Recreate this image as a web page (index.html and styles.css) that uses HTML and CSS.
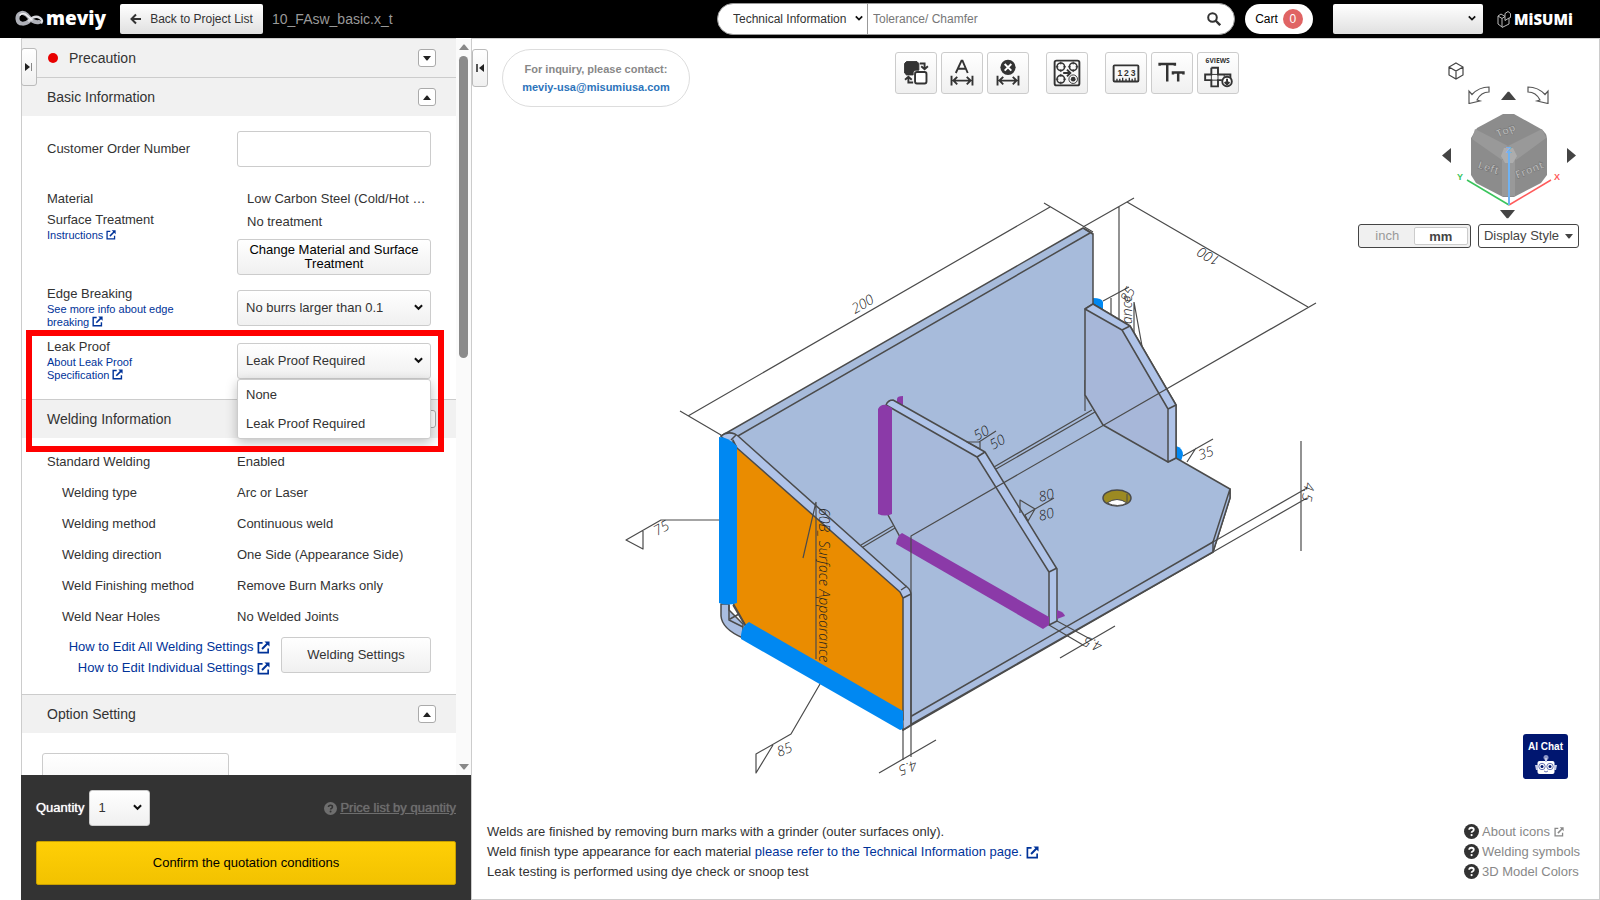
FILE: index.html
```html
<!DOCTYPE html>
<html lang="en">
<head>
<meta charset="utf-8">
<title>meviy - 10_FAsw_basic.x_t</title>
<link rel="stylesheet" href="styles.css">
</head>
<body>
<svg class="defs" aria-hidden="true">
  <symbol id="ext" viewBox="0 0 14 14"><path d="M6 2H1.500V12.500H12V8" fill="none" stroke="currentColor" stroke-width="1.800"/><path d="M8 .5h5.500V6l-2-2-5.300 5.300-1.500-1.500L10 2.500z" fill="currentColor"/></symbol>
  <symbol id="chev" viewBox="0 0 10 8"><path d="M1 2l4 4 4-4" fill="none" stroke="currentColor" stroke-width="2.200"/></symbol>
  <symbol id="up" viewBox="0 0 10 6"><path d="M0 6h10L5.500 .5h-1z" fill="currentColor"/></symbol>
  <symbol id="down" viewBox="0 0 10 6"><path d="M0 0h10L5.500 5.500h-1z" fill="currentColor"/></symbol>
  <symbol id="help" viewBox="0 0 16 16"><circle cx="8" cy="8" r="8" fill="currentColor"/><path d="M5.500 6.200Q5.600 4 8 4t2.400 2Q10.400 7.300 9 8q-.9.400-.9 1.300" fill="none" stroke="var(--mark)" stroke-width="1.900"/><circle cx="8.100" cy="11.800" r="1.200" fill="var(--mark)"/></symbol>
</svg>

<header class="topbar">
  <a class="brand" href="#" aria-label="meviy home">
    <svg width="30" height="18" viewBox="0 0 30 18" fill="none" stroke-linecap="round"><path d="M15 10C11 15 3 15 2.500 9S8 1 12 5c4 5 7 8 12 7" stroke="#aeb0b8" stroke-width="4"/><path d="M14 10.500c3-3 6-4.500 9-3.500s5 3.500 3.500 5.500" stroke="#d9dade" stroke-width="2.500"/><path d="M5 5c2-2 5-1.500 7 .5l5 4.500" stroke="#f4f4f6" stroke-width="1.300"/></svg>
    <span>meviy</span>
  </a>
  <button class="back" type="button"><svg width="12" height="12" viewBox="0 0 12 12"><path d="M11 6H2M6 1.500L1.500 6 6 10.500" fill="none" stroke="currentColor" stroke-width="2"/></svg>Back to Project List</button>
  <span class="project">10_FAsw_basic.x_t</span>
  <form class="search">
    <div class="select-wrap search-kind"><select aria-label="Search category"><option>Technical Information</option></select><svg class="chev"><use href="#chev"/></svg></div>
    <input type="text" placeholder="Tolerance/ Chamfer" aria-label="Search">
    <button type="button" aria-label="Search"><svg width="14" height="14" viewBox="0 0 14 14"><circle cx="5.500" cy="5.500" r="4.300" fill="none" stroke="currentColor" stroke-width="2"/><path d="M8.500 8.500l4.700 4.700" stroke="currentColor" stroke-width="2.400"/></svg></button>
  </form>
  <a class="cart" href="#">Cart <span>0</span></a>
  <div class="select-wrap account"><select aria-label="Account"><option></option></select><svg class="chev"><use href="#chev"/></svg></div>
  <a class="misumi" href="#" aria-label="MiSUMi">
    <svg width="15" height="17" viewBox="0 0 15 17" fill="none" stroke="#bbb"><path d="M1 5l4 2.500V16l-4-3zM5 7.500l3-2v4l4-2.500v6L5 16.500M1 5l3-2 4 2.500M8 2.500l3-2 2.500 2v4L12 7M8 2.500v3"/></svg><span>MiSUMi</span>
  </a>
</header>

<div class="workspace">
  <aside class="sidebar">
    <button class="tab tab-left" type="button" aria-label="Expand panel"><svg width="8" height="8" viewBox="0 0 8 8"><path d="M0 0l5 4-5 4z" fill="#222"/><path d="M6.500 0v8" stroke="#888"/></svg></button>
    <div class="scroller">
      <div class="panel">
        <section>
          <h2 class="head"><span class="dot"></span><span class="grow">Precaution</span><button class="toggle" type="button" aria-label="Expand Precaution"><svg><use href="#down"/></svg></button></h2>
        </section>
        <section>
          <h2 class="head"><span class="grow">Basic Information</span><button class="toggle" type="button" aria-label="Collapse Basic Information"><svg><use href="#up"/></svg></button></h2>
          <div class="basic">
            <div class="field order"><label for="order">Customer Order Number</label><input id="order" type="text"></div>
            <div class="field material">
              <div><p>Material</p><p class="surface">Surface Treatment</p><a class="small" href="#">Instructions <svg class="ext ext-s"><use href="#ext"/></svg></a></div>
              <div><p class="inset">Low Carbon Steel (Cold/Hot …</p><p class="inset treat">No treatment</p><button class="btn change" type="button">Change Material and Surface Treatment</button></div>
            </div>
            <div class="field choice">
              <div class="caption"><label for="edge">Edge Breaking</label><a class="small" href="#">See more info about edge breaking <svg class="ext ext-m"><use href="#ext"/></svg></a></div>
              <div class="select-wrap"><select id="edge"><option>No burrs larger than 0.1</option></select><svg class="chev"><use href="#chev"/></svg></div>
            </div>
            <div class="field choice leak">
              <div class="caption"><label for="leak">Leak Proof</label><a class="small" href="#">About Leak Proof<br>Specification <svg class="ext ext-m"><use href="#ext"/></svg></a></div>
              <div class="select-wrap"><select id="leak"><option>Leak Proof Required</option><option>None</option></select><svg class="chev"><use href="#chev"/></svg>
                <ul class="menu" role="listbox" aria-label="Leak Proof"><li role="option">None</li><li role="option">Leak Proof Required</li></ul>
              </div>
              <div class="marker"></div>
            </div>
          </div>
        </section>
        <section>
          <h2 class="head"><span class="grow">Welding Information</span><button class="toggle" type="button" aria-label="Collapse Welding Information"><svg><use href="#up"/></svg></button></h2>
          <dl class="weld">
            <dt class="main">Standard Welding</dt><dd>Enabled</dd>
            <dt>Welding type</dt><dd>Arc or Laser</dd>
            <dt>Welding method</dt><dd>Continuous weld</dd>
            <dt>Welding direction</dt><dd>One Side (Appearance Side)</dd>
            <dt>Weld Finishing method</dt><dd>Remove Burn Marks only</dd>
            <dt>Weld Near Holes</dt><dd>No Welded Joints</dd>
          </dl>
          <div class="weld-actions">
            <div><a href="#">How to Edit All Welding Settings <svg class="ext"><use href="#ext"/></svg></a><a href="#">How to Edit Individual Settings <svg class="ext"><use href="#ext"/></svg></a></div>
            <button class="btn settings" type="button">Welding Settings</button>
          </div>
        </section>
        <section>
          <h2 class="head"><span class="grow">Option Setting</span><button class="toggle" type="button" aria-label="Collapse Option Setting"><svg><use href="#up"/></svg></button></h2>
          <div class="options"><button class="btn option" type="button">Remove burrs</button></div>
        </section>
      </div>
      <div class="scrollbar" aria-hidden="true"><svg><use href="#up"/></svg><div class="track"><div class="thumb"></div></div><svg><use href="#down"/></svg></div>
    </div>
    <footer class="order-bar">
      <div class="qty">
        <label for="qty">Quantity</label>
        <div class="select-wrap"><select id="qty"><option>1</option></select><svg class="chev"><use href="#chev"/></svg></div>
        <a class="price" href="#"><svg width="13" height="13"><use href="#help"/></svg><span>Price list by quantity</span></a>
      </div>
      <button class="confirm" type="button">Confirm the quotation conditions</button>
    </footer>
  </aside>

  <main class="viewer">
    <svg class="model" viewBox="472 39 1127 860" role="img" aria-label="3D welded bracket model">
      <g stroke="#4b4b4b" stroke-width="1.500" stroke-linejoin="round">
        <g class="thin" fill="none">
          <path d="M688 416L1050 207M680 411l41 24M1044 203l49 29M1083 227l51-29M1127 202l181 105M1119 207v113"/>
          <path d="M1103 301l26-14M1111 298v17M1134 302v31M1134 302l8 44"/>
        </g>
        <path d="M1093 298q9 0 10 4v9l-10-6z" fill="#0088f2" stroke="none"/>
        <path d="M1176 446q7 2 7 9l-2 6-5-3z" fill="#0088f2" stroke="none"/>
        <path d="M721 436L1083 228l10 6v70l83 154 54 31v9l-17 54L903 730V590L733 448z" fill="#a7bbdb"/>
        <path d="M731 440L1090 233M1085 229l8 5" fill="none"/>
        <g class="thin" fill="none"><path d="M861 545l32-19M863 547l32-19M994 467l98-57M996 469l99-57M1085 380v31"/></g>
        <path d="M903 721l310-179 17-53v9l-17 54-310 177z" fill="#a9bde0"/>
        <path d="M1213 541v11" fill="none"/>
        <path d="M1085 309l8-5 37 22 46 79v53l-8 4-65-37-18-30z" fill="#a7b7d9"/>
        <path d="M1085 309l8-5 37 22 46 79v53l-8 4v-53l-46-79z" fill="#afc3e8"/>
        <path d="M1122 330l8-4M1168 409l8-4" fill="none"/>
        <ellipse cx="1117" cy="498" rx="14" ry="8" fill="#9c8a22"/>
        <path d="M1107 503q10-7 20 0-9 5-20 0z" fill="#fff" stroke-width="1"/><path d="M1127 494v8" stroke-width="1"/>
        <path d="M897 399q0-3 6-3v12h-6z" fill="#8b3aa8" stroke="none"/>
        <path d="M886 405l7-5 92 52 72 117v52l-8 4-149-89-12-21z" fill="#a7b9da" stroke="none"/>
        <path d="M886 405q2-5 7-5l92 52 72 117v52l-8 4v-53l-72-115z" fill="#afc3e8"/>
        <path d="M977 457l8-5M1049 572l8-4M888 515l12 22" fill="none"/>
        <path d="M878 409q3-5 8-4l6 3v106q-7 3-14 0z" fill="#8b3aa8" stroke="none"/>
        <path d="M896 544q1-8 6-11l147 84v8l-6 4z" fill="#8b3aa8" stroke="none"/>
        <path d="M1057 610q7 2 8 6l-8 3z" fill="#8b3aa8" stroke="none"/>
        <path d="M721 604v12q1 13 22 22v-14l-14-14v-6z" fill="#a9bde0"/>
        <path d="M721 436q6-5 14-2l3 2 169 151q4 3 4 8v130l-8 5-4-135-168-147z" fill="#afc3e8"/>
        <path d="M737 448l163 144 3 6v122L746 626l-13-23V440z" fill="#ea8c00"/>
        <path d="M729 605v15l14 7M733 605l13 22M730 619l9-5" fill="none"/>
        <path d="M731 440l5-5M901 590l6-4M903 598l8-4" fill="none"/>
        <path d="M719 437q9 0 18 9v157q-9 3-18 0z" fill="#0088f2" stroke="none"/>
        <path d="M741 635q1-9 8-13l154 89v17q-1 2-3 2L741 639z" fill="#0088f2" stroke="none"/>
        <g class="thin" fill="none">
          <path d="M911 757V536L1316 303M903 730v30M1213 542l94-54M1213 552l94-54M1301 441v110"/>
          <path d="M879 773l57-33M1060 658l55-32M1049 625l34 20M1057 621l35 19"/>
          <path d="M719 520h-58l-35 20 17 9v-18M820 684l-29 50-35 20v19l17-28"/>
          <path d="M816 502v157M816 502l-13 56M979 442l17-11M967 442h13v7zM1020 513v-13l15 9-10 6 3 6 7-12 19-11M1183 456l30-17M1196 448l-9 14"/>
        </g>
      </g>
      <g class="dims">
        <text transform="translate(855 314) rotate(-30)">200</text>
        <text transform="translate(1221 258) rotate(210)">100</text>
        <text transform="translate(657 536) rotate(-30)">75</text>
        <text transform="translate(779 757) rotate(-22)">85</text>
        <text transform="translate(977 441) rotate(-30)">50</text>
        <text transform="translate(993 450) rotate(-30)">50</text>
        <text transform="translate(1040 502) rotate(-15)">80</text>
        <text transform="translate(1040 521) rotate(-15)">80</text>
        <text transform="translate(1200 460) rotate(-18)">35</text>
        <text transform="translate(915 760) rotate(160)">4.5</text>
        <text transform="translate(1103 643) rotate(202)">4.5</text>
        <text transform="translate(1305 482) rotate(100)">4.5</text>
        <text transform="translate(819 508) rotate(90)">60B_ Surface Appearance</text>
        <text transform="translate(1132 324) rotate(-90)">ance</text>
        <text transform="translate(1128 304) rotate(-60)">85</text>
      </g>
    </svg>

    <button class="tab tab-right" type="button" aria-label="Collapse panel"><svg width="8" height="8" viewBox="0 0 8 8"><path d="M1 0v8" stroke="#222" stroke-width="1.500"/><path d="M8 0L3 4l5 4z" fill="#222"/></svg></button>

    <div class="upper">
      <div class="contact"><span>For inquiry, please contact:</span><a href="#">meviy-usa@misumiusa.com</a></div>
      <div class="tools">
        <button type="button" aria-label="Swap faces"><svg viewBox="0 0 42 42"><path d="M11 9h11l2 2v7h-4l-2 2v3h-7l-2-2V11z" fill="#333" stroke-width="1"/><rect x="20" y="20" width="12" height="12" rx="2" fill="#fff"/><path d="M25 11h5v5M26.500 14l3.500 3 3.500-3M18 31h-5v-5M9.500 28l3.500-3 3.500 3"/></svg></button>
        <button type="button" aria-label="Dimension text"><svg viewBox="0 0 42 42"><path d="M14.500 21L20.500 8h1L27 21M17 16.500h8M10 24v10M32 24v10M12 29h18M16 25l-4 4 4 4M26 25l4 4-4 4"/></svg></button>
        <button type="button" aria-label="Delete dimension"><svg viewBox="0 0 42 42"><circle cx="21" cy="15" r="8" fill="#333" stroke="none"/><path d="M17.500 11.500l7 7M24.500 11.500l-7 7" stroke="#fff"/><path d="M10 24v10M32 24v10M12 29h18M16 25l-4 4 4 4M26 25l4 4-4 4"/></svg></button>
        <button class="gap" type="button" aria-label="Hole groups"><svg viewBox="0 0 42 42"><rect x="8" y="8" width="26" height="26" rx="2"/><g stroke-width="1.600"><circle cx="14.500" cy="14.500" r="4"/><circle cx="27.500" cy="14.500" r="4"/><circle cx="14.500" cy="27.500" r="4"/></g><path d="M14.500 9v3m0 5v3M9 14.500h3m5 0h3M27.500 9v3m0 5v3M22 14.500h3m5 0h3M14.500 22v3m0 5v3M9 27.500h3m5 0h3" stroke-width="1"/><circle cx="27.500" cy="27.500" r="4.500" stroke-width="1"/><circle cx="27.500" cy="27.500" r="2.500" fill="#333" stroke="none"/><path d="M17 21h7M21 17.500l3.500 3.500-3.500 3.500"/></svg></button>
        <button class="gap" type="button" aria-label="Measure"><svg viewBox="0 0 42 42"><rect x="8" y="13" width="26" height="17" rx="1"/><path d="M11.500 30v-3m3 3v-3m3 3v-4m3.500 4v-3m3.500 3v-4m3 4v-3m3 3v-4" stroke-width="1.400"/><text x="12 19 26" y="24">123</text></svg></button>
        <button type="button" aria-label="Text size"><svg viewBox="0 0 42 42"><path d="M8 13.500v-2h16v2M16 12v18M22 22.500v-2h11v2M27.500 21v9" stroke-width="2.600"/></svg></button>
        <button type="button" aria-label="Six views"><svg viewBox="0 0 42 42"><text x="8" y="11" class="views">6VIEWS</text><path d="M14 15.500h7v7h13v5M14 15.500v7H7.500v6H14v6.500h7v-6.500h4"/><path d="M14 22.500h7v6h-7zM27.500 23v5" stroke-width="1"/><circle cx="30.500" cy="30" r="5" fill="#fff"/><path d="M30.500 27v6M28 30.500l2.500 2.500 2.500-2.500"/></svg></button>
      </div>
      <div class="view-nav">
        <button class="home" type="button" aria-label="Isometric view"><svg width="16" height="18" viewBox="0 0 16 18" fill="none" stroke="#444" stroke-width="1.200"><path d="M8 1l7 4v8l-7 4-7-4V5zM1 5l7 4 7-4M8 9v8"/></svg></button>
        <div class="turns">
          <button type="button" aria-label="Rotate left"><svg width="22" height="18" viewBox="0 0 22 18" fill="none" stroke="#555" stroke-width="1.200"><path d="M21 1v5q-8 0-12 8l3 1-11 2.500V5l3 3.500Q11 1 21 1z"/></svg></button>
          <button type="button" aria-label="Rotate up"><svg width="15" height="9" viewBox="0 0 10 6" preserveAspectRatio="none" color="#444"><use href="#up"/></svg></button>
          <button type="button" aria-label="Rotate right"><svg width="22" height="18" viewBox="0 0 22 18" fill="none" stroke="#555" stroke-width="1.200"><path d="M1 1v5q8 0 12 8l-3 1 11 2.500V5l-3 3.500Q11 1 1 1z"/></svg></button>
        </div>
        <div class="cube-row">
          <button type="button" aria-label="Turn left"><svg width="9" height="15" viewBox="0 0 9 15"><path d="M9 0v15L0 7.500z" fill="#444"/></svg></button>
          <svg class="cube" width="106" height="98" viewBox="1456 110 106 98">
            <path d="M1503 114h11l27 15q6 4 6 10v36l-6 8-27 14h-11l-27-14-5-8v-37l6-10z" fill="#8c8c8c"/>
            <path d="M1508 146l-33-17-3 10 30 21M1508 146l34-17 4 9-30 22M1502 160v36h13v-37" fill="#999"/>
            <path d="M1504 148h9l4 8-4 7h-8l-4-7z" fill="#adadad"/>
            <g class="faces"><text transform="translate(1498 138) rotate(-24)">Top</text><text transform="translate(1477 168) rotate(18)">Left</text><text transform="translate(1517 179) rotate(-22)">Front</text></g>
            <path d="M1509 205l-42-25" stroke="#3ac45c" stroke-width="1.500"/><path d="M1509 205l42-25" stroke="#ff5b5b" stroke-width="1.500"/><path d="M1509 205v-54" stroke="#6fb2f2" stroke-width="2"/>
            <g class="axes"><text x="1457" y="180" fill="#3ac45c">Y</text><text x="1554" y="180" fill="#ff5b5b">X</text><text x="1506" y="153" fill="#6fb2f2">Z</text></g>
          </svg>
          <button type="button" aria-label="Turn right"><svg width="9" height="15" viewBox="0 0 9 15"><path d="M0 0v15l9-7.500z" fill="#444"/></svg></button>
        </div>
        <button type="button" class="turn-down" aria-label="Rotate down"><svg width="15" height="9" viewBox="0 0 10 6" preserveAspectRatio="none" color="#444"><use href="#down"/></svg></button>
        <div class="view-options">
          <div class="units"><button type="button">inch</button><button class="on" type="button">mm</button></div>
          <button class="style" type="button">Display Style <svg width="8" height="5" viewBox="0 0 10 6"><use href="#down"/></svg></button>
        </div>
      </div>
    </div>

    <div class="lower">
      <a class="chat" href="#"><span>AI Chat</span><svg width="22" height="20" viewBox="0 0 22 20"><circle cx="11" cy="2.500" r="2.500" fill="#8d97c8"/><rect x="2.500" y="6" width="17" height="13" rx="2" fill="#fff"/><path d="M0 10h3v5H1zM19 10h3l-1 5h-2zM10 3h2v4h-2z" fill="#c5cae6"/><g fill="#fff" stroke="#6a75b5"><circle cx="7" cy="11.500" r="3.200"/><circle cx="15" cy="11.500" r="3.200"/><path d="M9 16q2 2 4 0" fill="none"/></g><circle cx="7" cy="11.500" r="1.500" fill="#001670"/><circle cx="15" cy="11.500" r="1.500" fill="#001670"/></svg></a>
      <div class="notes">
        <div><p>Welds are finished by removing burn marks with a grinder (outer surfaces only).</p><p>Weld finish type appearance for each material <a href="#">please refer to the Technical Information page. <svg class="ext"><use href="#ext"/></svg></a></p><p>Leak testing is performed using dye check or snoop test</p></div>
        <nav aria-label="Help"><a href="#"><svg class="q"><use href="#help"/></svg>About icons <svg class="ext ext-s"><use href="#ext"/></svg></a><a href="#"><svg class="q"><use href="#help"/></svg>Welding symbols</a><a href="#"><svg class="q"><use href="#help"/></svg>3D Model Colors</a></nav>
      </div>
    </div>
  </main>
</div>
</body>
</html>
```
FILE: styles.css
```css
* { box-sizing: border-box; }
body { margin: 0; height: 100vh; display: flex; flex-direction: column; overflow: hidden; background: #fff; color: #333; font: 13px/18px "Liberation Sans", Arial, sans-serif; }
button, input, select { font: inherit; color: inherit; margin: 0; }
button { cursor: pointer; padding: 0; border: 0; background: none; }
p, h2, ul, dl, dd { margin: 0; padding: 0; }
a { color: #003399; text-decoration: none; }
.defs { position: absolute; width: 0; height: 0; }
.grow { flex: 1; }

.select-wrap { position: relative; }
.select-wrap select { width: 100%; height: 100%; appearance: none; border: 1px solid #ccc; border-radius: 3px; padding: 0 8px; background: linear-gradient(#fff, #f0f0f0); }
.chev { position: absolute; right: 8px; top: 50%; width: 9px; height: 8px; margin-top: -5px; color: #111; pointer-events: none; }

.topbar { flex: none; height: 38px; background: #000; display: flex; align-items: center; padding: 0 26px 0 15px; font-size: 12px; }
.brand { display: flex; align-items: center; width: 105px; color: #fff; font: 800 19px/24px "Open Sans", sans-serif; }
.brand span { margin: 0 0 2px 1px; }
.back { height: 30px; width: 143px; display: flex; align-items: center; justify-content: center; gap: 8px; border-radius: 2px; background: linear-gradient(#fff, #e0e0e0); }
.project { margin-left: 9px; font-size: 14px; color: #999; flex: 1; }
.search { display: flex; align-items: center; width: 518px; height: 32px; border: 1px solid #999; border-radius: 16px; background: #fff; overflow: hidden; }
.search-kind { width: 150px; height: 30px; border-right: 1px solid #999; }
.search-kind select { border: 0; background: none; padding: 0 0 0 15px; }
.search-kind .chev { right: 4px; width: 8px; }
.search input { flex: 1; min-width: 0; border: 0; outline: 0; padding: 0 5px; }
.search input::placeholder { color: #777; opacity: 1; }
.search > button { width: 40px; display: grid; place-items: center; }
.cart { margin-left: 10px; width: 68px; height: 30px; border-radius: 15px; background: #fff; color: #000; display: flex; align-items: center; justify-content: center; gap: 5px; }
.cart span { width: 20px; height: 20px; border-radius: 10px; background: #e06464; color: #fff; line-height: 20px; text-align: center; }
.account { margin: 0 14px 0 20px; width: 150px; height: 30px; }
.account select { border: 0; border-radius: 2px; background: linear-gradient(#fff, #e0e0e0); }
.account .chev { right: 7px; width: 8px; }
.misumi { display: flex; align-items: center; gap: 2px; width: 77px; color: #fff; font: 800 15px/18px "Open Sans", sans-serif; }

.workspace { flex: 1; min-height: 0; display: flex; padding-left: 21px; }
.sidebar { flex: none; width: 451px; position: relative; display: flex; flex-direction: column; border: solid #ccc; border-width: 0 1px; }
.tab { position: absolute; z-index: 2; width: 16px; height: 38px; border: 1px solid #bbb; border-radius: 3px; background: linear-gradient(#fff, #f0f0f0); display: grid; place-items: center; }
.tab-left { left: -1px; top: 10px; }
.tab-right { left: 0; top: 10px; }
.scroller { flex: 1; min-height: 0; display: flex; }
.panel { flex: 1; min-width: 0; overflow: hidden; }
.scrollbar { flex: none; width: 15px; background: #fafafa; display: flex; flex-direction: column; align-items: center; padding: 6px 0 5px; color: #888; }
.scrollbar svg { width: 10px; height: 6px; }
.track { flex: 1; padding: 6px 0; }
.thumb { width: 9px; height: 43%; border-radius: 5px; background: #8b8b8b; }

.head { display: flex; align-items: center; height: 39px; padding: 0 20px 0 25px; border-top: 1px solid #ccc; background: #f1f1f1; font-size: 14px; font-weight: 400; }
.dot { width: 10px; height: 10px; margin: 0 11px 0 1px; border-radius: 5px; background: #e80000; }
.toggle { width: 18px; height: 18px; border: 1px solid #aaa; border-radius: 3px; background: #fff; color: #222; display: grid; place-items: center; }
.toggle svg { width: 8px; height: 5px; }
.basic { padding: 15px 25px 17px; }
.field { display: grid; grid-template-columns: 190px 1fr; }
.field input { height: 36px; border: 1px solid #ccc; border-radius: 3px; padding: 0 8px; width: 100%; }
.order { align-items: center; margin-bottom: 23px; }
.surface { margin-top: 3px; }
.inset { margin-left: 10px; white-space: nowrap; }
.treat { margin: 5px 0 8px 10px; }
.small { display: block; font-size: 11px; line-height: 13px; }
.btn { border: 1px solid #ccc; border-radius: 3px; background: linear-gradient(#fff, #f0f0f0); }
.change { width: 100%; height: 36px; line-height: 14px; color: #000; padding: 0 8px; }
.choice { margin-top: 8px; position: relative; }
.caption { padding-top: 1px; }
.choice label { display: block; }
.choice .select-wrap { height: 36px; margin-top: 6px; }
.choice .small { width: 135px; }
.ext { width: 13px; height: 13px; vertical-align: -3px; }
.ext-s { width: 10px; height: 10px; vertical-align: -1px; }
.ext-m { width: 11px; height: 11px; vertical-align: -1px; }
.menu { position: absolute; z-index: 3; top: 36px; left: 0; right: 0; list-style: none; background: #fff; border: 1px solid #ccc; border-radius: 3px; box-shadow: 0 4px 12px rgba(0, 0, 0, .25); }
.menu li { padding: 0 8px; line-height: 29px; }
.marker { position: absolute; z-index: 4; top: -7px; left: -21px; right: -13px; height: 122px; border: 6px solid #f00; pointer-events: none; }
.material { margin-bottom: 9px; }
.weld { display: grid; grid-template-columns: 190px 1fr; padding: 8px 25px 4px; line-height: 31px; }
.weld dt { padding-left: 15px; }
.weld .main { padding-left: 0; }
.weld-actions { display: flex; justify-content: flex-end; gap: 11px; padding: 0 25px 16px; }
.weld-actions a { display: block; line-height: 21px; text-align: right; }
.settings { width: 150px; height: 36px; margin-top: 1px; }
.options { padding: 20px; }
.option { width: 187px; height: 54px; text-align: left; padding: 0 21px; }

.order-bar { flex: none; margin-left: -1px; background: #333; padding: 15px; }
.qty { display: flex; align-items: center; gap: 5px; margin-bottom: 15px; color: #fff; }
.qty label { text-shadow: 0 0 1px #fff; }
.qty .select-wrap { width: 61px; height: 36px; color: #333; }
.price { margin-left: auto; display: flex; align-items: center; gap: 3px; color: #6e6e6e; --mark: #333; text-shadow: 0 0 1px #6e6e6e; }
.price span { text-decoration: underline; }
.confirm { width: 100%; height: 44px; border: 1px solid #c9a000; border-radius: 2px; background: linear-gradient(#ffcf06, #f2c200); color: #000; }

.viewer { flex: 1; min-width: 0; position: relative; display: flex; flex-direction: column; justify-content: space-between; border: solid #ccc; border-width: 1px 1px 1px 0; }
.model { position: absolute; left: 0; top: 0; width: 100%; height: 100%; }
.thin { stroke-width: 1.2; }
.dims { font: italic 300 14px "Open Sans", sans-serif; fill: #222; }
.upper { position: relative; display: flex; align-items: flex-start; padding: 10px 20px 0 30px; }
.contact { width: 188px; height: 58px; border: 1px solid #ddd; border-radius: 29px; display: flex; flex-direction: column; align-items: center; justify-content: center; color: #888; font: bold 11px/18px "Liberation Sans", Arial, sans-serif; background: #fff; }
.contact a { color: #2d74bb; }
.tools { display: flex; gap: 4px; margin: 3px auto 0 205px; }
.tools button { width: 42px; height: 42px; border: 1px solid #ccc; border-radius: 3px; background: linear-gradient(#fff, #f0f0f0); }
.tools .gap { margin-left: 13px; }
.tools svg { display: block; width: 40px; height: 40px; fill: none; stroke: #333; stroke-width: 2; }
.tools text { fill: #333; stroke: none; font: bold 9px "Liberation Sans", sans-serif; }
.tools .views { font: bold 7px "Open Sans", sans-serif; }
.view-nav { display: flex; flex-direction: column; align-items: flex-end; color: #444; }
.view-nav svg { display: block; }
.home { margin: 13px 115px 0 0; }
.turns { display: flex; gap: 11px; margin: 6px 30px 0 0; align-items: center; }
.cube-row { display: flex; align-items: center; gap: 5px; margin: 6px 3px 0 0; }
.cube-row button { margin-bottom: 8px; }
.turn-down { margin: 2px 64px 0 0; }
.view-options { display: flex; gap: 7px; margin-top: 5px; }
.units { display: flex; width: 113px; height: 24px; padding: 2px; border: 1px solid #444; border-radius: 3px; background: #f0f0f0; }
.units button { flex: 1; color: #999; }
.units .on { border: 1px solid #ccc; border-radius: 2px; background: #fff; color: #444; font-weight: bold; }
.style { display: flex; align-items: center; justify-content: center; gap: 6px; width: 101px; height: 24px; border: 1px solid #444; border-radius: 3px; background: #fff; }
.faces { font: bold 11px "Open Sans", sans-serif; fill: #bbb; stroke: #666; stroke-width: .4; }
.axes { font: bold 9px "Liberation Sans", sans-serif; }
.lower { position: relative; display: flex; flex-direction: column; }
.chat { align-self: flex-end; margin: 0 31px 43px 0; width: 45px; height: 45px; border-radius: 3px; background: #001670; color: #fff; display: flex; flex-direction: column; align-items: center; padding-top: 4px; font: bold 10px/17px "Liberation Sans", Arial, sans-serif; }
.notes { display: flex; justify-content: space-between; padding: 0 19px 17px 15px; line-height: 20px; }
.notes nav { display: flex; flex-direction: column; width: 116px; white-space: nowrap; }
.notes nav a { color: #888; }
.q { width: 15px; height: 15px; margin-right: 3px; vertical-align: -3px; color: #333; --mark: #fff; }
```
